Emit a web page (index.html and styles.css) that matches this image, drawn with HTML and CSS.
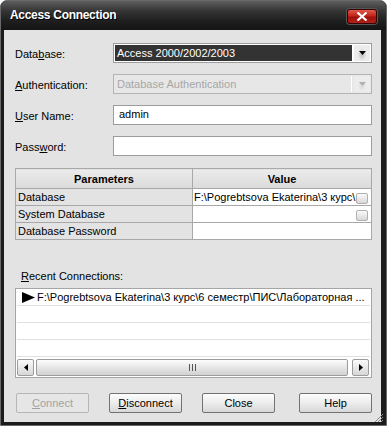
FILE: index.html
```html
<!DOCTYPE html>
<html lang="en">
<head>
    <meta charset="UTF-8">
    <meta name="viewport" content="width=device-width, initial-scale=1.0">
    <title>Access Connection</title>
    <link rel="stylesheet" href="styles.css">
</head>
<body>
<div class="window">
    <div class="titlebar">
        <span class="title">Access Connection</span>
        <button class="close-btn" type="button">
            <svg width="12" height="9" viewBox="0 0 12 9"><path d="M1.5 0.5 L10.5 8.5 M10.5 0.5 L1.5 8.5" stroke="#fff" stroke-width="2.2"/></svg>
        </button>
    </div>
    <div class="client">
        <div class="fields">
            <label>Data<u>b</u>ase:</label>
            <div class="combo">
                <span class="combo-text selected">Access 2000/2002/2003</span>
                <span class="drop"><svg width="7" height="4" viewBox="0 0 7 4"><path d="M0 0 H7 L3.5 4 Z" fill="#000"/></svg></span>
            </div>

            <label><u>A</u>uthentication:</label>
            <div class="combo disabled">
                <span class="combo-text">Database Authentication</span>
                <span class="drop"><svg width="7" height="4" viewBox="0 0 7 4"><path d="M0 0 H7 L3.5 4 Z" fill="#b0b0b0"/></svg></span>
            </div>

            <label><u>U</u>ser Name:</label>
            <div class="textbox">admin</div>

            <label>Pass<u>w</u>ord:</label>
            <div class="textbox"></div>
        </div>

        <table class="params">
            <tr>
                <th class="col-name">Parameters</th>
                <th>Value</th>
            </tr>
            <tr>
                <td class="col-name">Database</td>
                <td class="value"><span class="value-text">F:\Pogrebtsova Ekaterina\3 курс\</span><span class="dots"></span></td>
            </tr>
            <tr>
                <td class="col-name">System Database</td>
                <td class="value"><span class="dots"></span></td>
            </tr>
            <tr>
                <td class="col-name">Database Password</td>
                <td class="value"></td>
            </tr>
        </table>

        <div class="recent-label"><u>R</u>ecent Connections:</div>
        <div class="listbox">
            <div class="list-row">
                <svg class="arrow" width="13" height="11" viewBox="0 0 13 11"><path d="M0 0 L13 5.5 L0 11 Z" fill="#000"/></svg>
                <span>F:\Pogrebtsova Ekaterina\3 курс\6 семестр\ПИС\Лабораторная ...</span>
            </div>
            <div class="list-row"></div>
            <div class="list-row"></div>
            <div class="list-row"></div>
            <div class="hscroll">
                <span class="sb-btn"><svg width="4" height="7" viewBox="0 0 4 7"><path d="M4 0 V7 L0 3.5 Z" fill="#000"/></svg></span>
                <span class="sb-thumb"><span class="grip-lines"></span></span>
                <span class="sb-btn"><svg width="4" height="7" viewBox="0 0 4 7"><path d="M0 0 V7 L4 3.5 Z" fill="#000"/></svg></span>
            </div>
        </div>

        <div class="buttons">
            <button class="btn" type="button" disabled><u>C</u>onnect</button>
            <button class="btn" type="button"><u>D</u>isconnect</button>
            <button class="btn" type="button">Close</button>
            <button class="btn help" type="button">Help</button>
        </div>
    </div>
    <svg class="size-grip" width="11" height="11" viewBox="0 0 11 11">
        <path d="M10 2 L2 10 M10 5 L5 10 M10 8 L8 10" stroke="#8a8a8a" stroke-width="1"/>
    </svg>
</div>
</body>
</html>
```

FILE: styles.css
```css
body {
    margin: 0;
    padding: 0;
    background: #fff;
    font-family: "Liberation Sans", Arial, sans-serif;
    font-size: 11px;
    color: #000;
}
.window {
    position: relative;
    box-sizing: border-box;
    width: 387px;
    height: 426px;
    background: #1c1c1c;
    border: 1px solid #6a6a6a;
    border-radius: 7px 7px 0 0;
    display: flex;
    flex-direction: column;
}
/* Title bar */
.titlebar {
    height: 29px;
    flex: none;
    display: flex;
    align-items: center;
    justify-content: space-between;
    padding: 0 9px 0 9px;
    border-radius: 6px 6px 0 0;
    background: linear-gradient(#5e5e5e, #343434 35%, #1e1e1e 70%, #141414);
}
.title {
    color: #fff;
    font-weight: bold;
    font-size: 12px;
    letter-spacing: -0.3px;
    margin-top: -1px;
    text-shadow: 1px 1px 0 #000;
}
.close-btn {
    width: 30px;
    height: 15px;
    padding: 0;
    margin-top: 1px;
    border: 1px solid #3a0000;
    border-radius: 3px;
    background: linear-gradient(#e05a4a, #c1251a 45%, #a0100a 55%, #b0221a);
    box-shadow: 0 0 0 1px #555;
    display: flex;
    align-items: center;
    justify-content: center;
}
/* Client area */
.client {
    flex: 1;
    margin: 0 5px 4px 3px;
    background: #e3e3e3;
    padding: 13px 9px 9px 11px;
    display: flex;
    flex-direction: column;
}
.fields {
    display: grid;
    grid-template-columns: 98px 259px;
    grid-auto-rows: 20px;
    row-gap: 11px;
    align-items: center;
}
.fields label {
    padding-top: 1px;
}
.combo, .textbox {
    box-sizing: border-box;
    height: 20px;
    border: 1px solid #9c9c9c;
    background: #fff;
}
.combo {
    display: flex;
    padding: 1px;
}
.combo-text {
    flex: 1;
    line-height: 16px;
    padding-left: 2px;
    margin-right: 2px;
}
.combo-text.selected {
    background: #333;
    color: #fff;
}
.combo.disabled {
    background: #e7e7e7;
    border-color: #b4b4b4;
}
.combo.disabled .combo-text {
    color: #a6a6a6;
    border-right: 1px solid #fff;
}
.drop {
    width: 16px;
    display: flex;
    align-items: center;
    justify-content: center;
    background: radial-gradient(ellipse 5px 7px at 50% 60%, #bdbdbd, #e8e8e8 80%, #ececec);
}
.combo.disabled .drop {
    background: radial-gradient(ellipse 5px 7px at 50% 60%, #d6d6d6, #ececec 80%);
}
.textbox {
    line-height: 16px;
    padding-left: 5px;
}
/* Parameters grid */
.params {
    margin-top: 12px;
    width: 357px;
    border-collapse: collapse;
    table-layout: fixed;
}
.params th, .params td {
    border: 1px solid #a8a8a8;
    padding: 0 2px;
    white-space: nowrap;
    overflow: hidden;
}
.params th {
    height: 19px;
    font-weight: bold;
    text-align: center;
    background: linear-gradient(#ececec, #dadada);
}
.params td {
    height: 16px;
    line-height: 15px;
}
.params .col-name {
    width: 172px;
}
.params .value {
    background: #fff;
    padding: 0 3px 0 1px;
}
.dots {
    float: right;
    box-sizing: border-box;
    width: 12px;
    height: 11px;
    margin-top: 3px;
    border: 1px solid #b0b0b0;
    border-radius: 2px;
    background: linear-gradient(#fafafa, #d8d8d8);
}
/* Recent connections */
.recent-label {
    margin-top: 29px;
    padding-left: 6px;
    line-height: 14px;
}
.listbox {
    box-sizing: border-box;
    margin-top: 5px;
    height: 90px;
    border: 1px solid #a5a5a5;
    background: #fff;
    padding: 0 1px;
}
.list-row {
    box-sizing: border-box;
    height: 17px;
    border-bottom: 1px solid #e0e0e0;
    display: flex;
    align-items: center;
    gap: 2px;
    padding-left: 5px;
    white-space: nowrap;
    overflow: hidden;
}
.list-row .arrow {
    flex: none;
}
.hscroll {
    margin: 2px 1px 0 0;
    height: 17px;
    display: flex;
    gap: 2px;
}
.sb-btn {
    box-sizing: border-box;
    width: 17px;
    display: flex;
    align-items: center;
    justify-content: center;
    border: 1px solid #9c9c9c;
    border-radius: 2px;
    background: linear-gradient(#fbfbfb, #d6d6d6);
}
.sb-thumb {
    flex: 1;
    box-sizing: border-box;
    margin-right: 2px;
    border: 1px solid #9c9c9c;
    border-radius: 2px;
    background: linear-gradient(#fdfdfd, #e6e6e6 50%, #d2d2d2);
    display: flex;
    align-items: center;
    justify-content: center;
}
.grip-lines {
    width: 7px;
    height: 7px;
    background: repeating-linear-gradient(90deg, #555 0 1px, transparent 1px 3px);
}
/* Bottom buttons */
.buttons {
    margin-top: 15px;
    display: flex;
    gap: 20px;
    padding-left: 1px;
}
.btn {
    width: 73px;
    height: 20px;
    padding: 0;
    font-family: "Liberation Sans", Arial, sans-serif;
    font-size: 11px;
    color: #000;
    border: 1px solid #727272;
    border-radius: 2px;
    background: linear-gradient(#fdfdfd, #ececec 50%, #d8d8d8);
}
.btn.help {
    margin-left: auto;
}
.btn:disabled {
    color: #a3a3a3;
    border-color: #b6b6b6;
    background: #e6e6e6;
}
.size-grip {
    position: absolute;
    right: 2px;
    bottom: 2px;
}
```
